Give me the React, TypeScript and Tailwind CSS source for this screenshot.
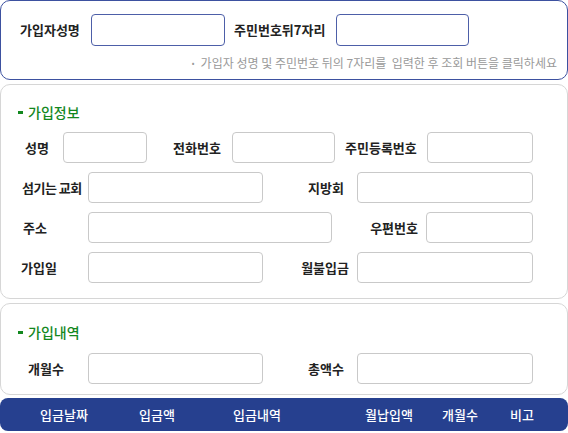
const font = { fontFamily: '"Noto Sans CJK KR", "Noto Sans", sans-serif' };

function Field({ w }: { w: string }) {
  return <div className={`h-[31px] ${w} rounded-[4px] border border-[#c9c9c9] bg-white`} />;
}

function Heading({ text }: { text: string }) {
  return (
    <div className="flex h-[20px] items-center pl-[17px]">
      <span className="mr-[5px] h-[3px] w-[5px] bg-[#13881f]" />
      <span className="text-[14px] font-medium text-[#13881f]">{text}</span>
    </div>
  );
}

export default function App() {
  return (
    <div style={font} className="flex h-[433px] w-[568px] flex-col bg-white text-[#222]">
      {/* 조회 */}
      <div className="flex h-[80px] flex-col rounded-[10px] border border-[#3d51a0] bg-white">
        <div className="mt-[13px] flex h-[32px] items-center">
          <span className="w-[90px] pl-[19px] text-[13px] font-bold">가입자성명</span>
          <div className="h-[32px] w-[134px] rounded-[4px] border border-[#4d5fa8]" />
          <span className="w-[111px] pl-[9px] text-[13px] font-bold">주민번호뒤7자리</span>
          <div className="h-[32px] w-[133px] rounded-[4px] border border-[#4d5fa8]" />
        </div>
        <div className="mt-[8px] flex items-center justify-end pr-[10px] text-[12px] text-[#999]">
          <span className="mr-[6px] text-[8px]">•</span>
          <span className="whitespace-pre">가입자 성명 및 주민번호 뒤의 7자리를  입력한 후 조회 버튼을 클릭하세요</span>
        </div>
      </div>

      {/* 가입정보 */}
      <div className="mt-[4px] flex h-[215px] flex-col gap-[9px] rounded-[10px] border border-[#d6d6d6] pt-[17px]">
        <Heading text="가입정보" />
        <div className="mt-[1px] flex items-center text-[13px] font-bold">
          <span className="w-[62px] pl-[24px]">성명</span>
          <Field w="w-[84px]" />
          <span className="w-[85px] pl-[26px]">전화번호</span>
          <Field w="w-[103px]" />
          <span className="w-[92px] pl-[10px]">주민등록번호</span>
          <Field w="w-[106px]" />
        </div>
        <div className="flex items-center text-[13px] font-bold">
          <span className="w-[87px] pl-[21px] tracking-[-0.5px]">섬기는 교회</span>
          <Field w="w-[175px]" />
          <span className="w-[94px] pr-[13px] text-right">지방회</span>
          <Field w="w-[176px]" />
        </div>
        <div className="flex items-center text-[13px] font-bold">
          <span className="w-[87px] pl-[22px]">주소</span>
          <Field w="w-[244px]" />
          <span className="w-[94px] pr-[8px] text-right">우편번호</span>
          <Field w="w-[107px]" />
        </div>
        <div className="flex items-center text-[13px] font-bold">
          <span className="w-[87px] pl-[20px]">가입일</span>
          <Field w="w-[175px]" />
          <span className="w-[94px] pr-[8px] text-right">월불입금</span>
          <Field w="w-[176px]" />
        </div>
      </div>

      {/* 가입내역 */}
      <div className="mt-[4px] flex h-[92px] flex-col gap-[11px] rounded-[10px] border border-[#d6d6d6] pt-[18px]">
        <Heading text="가입내역" />
        <div className="flex items-center text-[13px] font-bold">
          <span className="w-[87px] pl-[27px]">개월수</span>
          <Field w="w-[175px]" />
          <span className="w-[94px] pr-[13px] text-right">총액수</span>
          <Field w="w-[176px]" />
        </div>
      </div>

      {/* 입금 목록 헤더 */}
      <div className="mt-[3px] flex h-[33px] items-center rounded-[8px] bg-[#26408f] text-[13px] font-medium text-white">
        <span className="ml-[34px] w-[60px] text-center">입금날짜</span>
        <span className="ml-[33px] w-[60px] text-center">입금액</span>
        <span className="ml-[40px] w-[60px] text-center">입금내역</span>
        <span className="ml-[72px] w-[60px] text-center">월납입액</span>
        <span className="ml-[11px] w-[60px] text-center">개월수</span>
        <span className="ml-[2px] w-[60px] text-center">비고</span>
      </div>
    </div>
  );
}
